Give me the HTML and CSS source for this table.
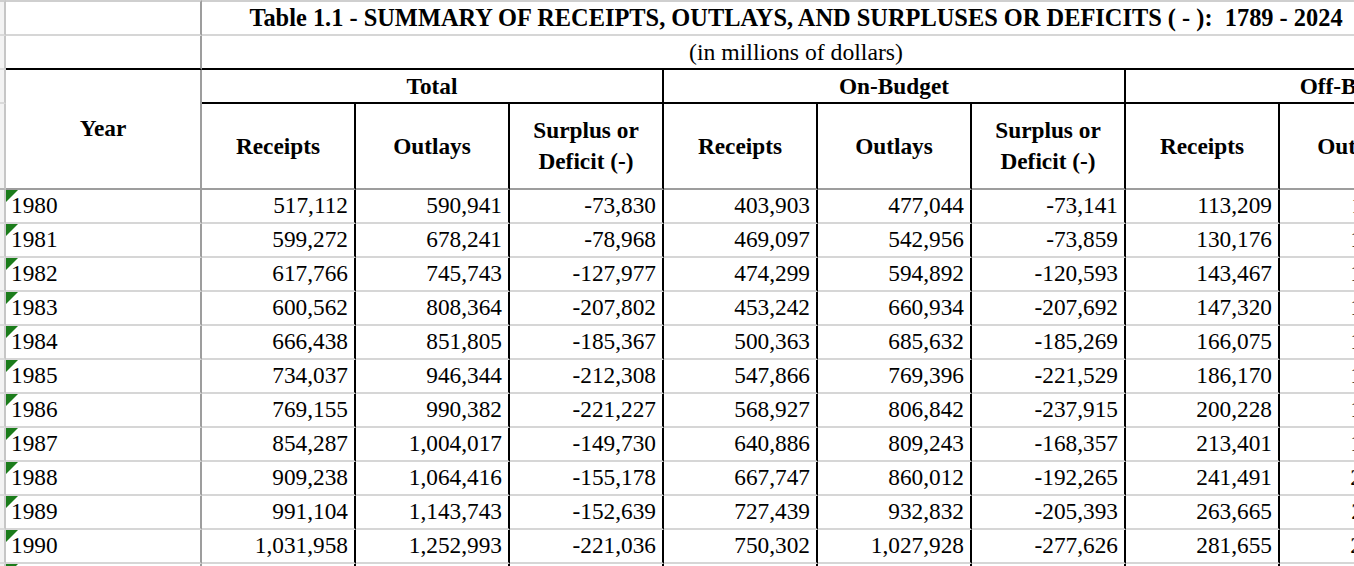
FILE: index.html
```html
<!DOCTYPE html>
<html lang="en">
<head>
<meta charset="utf-8">
<title>Table 1.1 - Summary of Receipts, Outlays, and Surpluses or Deficits</title>
<link rel="stylesheet" href="styles.css">
</head>
<body>
<table class="sheet">
  <colgroup>
    <col class="c-strip">
    <col class="c-year">
    <col class="c-num"><col class="c-num"><col class="c-num">
    <col class="c-num"><col class="c-num"><col class="c-num">
    <col class="c-num"><col class="c-num"><col class="c-num">
  </colgroup>
  <tbody>
    <tr class="r-title">
      <td class="strip"></td>
      <td class="blank"></td>
      <td class="title" colspan="9">Table 1.1 - SUMMARY OF RECEIPTS, OUTLAYS, AND SURPLUSES OR DEFICITS ( - ):&nbsp; 1789 - 2024</td>
    </tr>
    <tr class="r-sub">
      <td class="strip"></td>
      <td class="blank"></td>
      <td class="sub" colspan="9">(in millions of dollars)</td>
    </tr>
    <tr class="r-group">
      <td class="strip"></td>
      <th class="year-h" rowspan="2">Year</th>
      <th class="grp" colspan="3">Total</th>
      <th class="grp" colspan="3">On-Budget</th>
      <th class="grp" colspan="3">Off-Budget</th>
    </tr>
    <tr class="r-head">
      <td class="strip"></td>
      <th class="hd">Receipts</th>
      <th class="hd">Outlays</th>
      <th class="hd">Surplus or<br>Deficit (-)</th>
      <th class="hd">Receipts</th>
      <th class="hd">Outlays</th>
      <th class="hd">Surplus or<br>Deficit (-)</th>
      <th class="hd">Receipts</th>
      <th class="hd">Outlays</th>
      <th class="hd">Surplus or<br>Deficit (-)</th>
    </tr>
    <tr class="r-data"><td class="strip"></td><td class="yr">1980</td><td class="n">517,112</td><td class="n">590,941</td><td class="n">-73,830</td><td class="n">403,903</td><td class="n">477,044</td><td class="n">-73,141</td><td class="n">113,209</td><td class="n">113,897</td><td class="n">-689</td></tr>
    <tr class="r-data"><td class="strip"></td><td class="yr">1981</td><td class="n">599,272</td><td class="n">678,241</td><td class="n">-78,968</td><td class="n">469,097</td><td class="n">542,956</td><td class="n">-73,859</td><td class="n">130,176</td><td class="n">135,285</td><td class="n">-5,109</td></tr>
    <tr class="r-data"><td class="strip"></td><td class="yr">1982</td><td class="n">617,766</td><td class="n">745,743</td><td class="n">-127,977</td><td class="n">474,299</td><td class="n">594,892</td><td class="n">-120,593</td><td class="n">143,467</td><td class="n">150,851</td><td class="n">-7,384</td></tr>
    <tr class="r-data"><td class="strip"></td><td class="yr">1983</td><td class="n">600,562</td><td class="n">808,364</td><td class="n">-207,802</td><td class="n">453,242</td><td class="n">660,934</td><td class="n">-207,692</td><td class="n">147,320</td><td class="n">147,430</td><td class="n">-110</td></tr>
    <tr class="r-data"><td class="strip"></td><td class="yr">1984</td><td class="n">666,438</td><td class="n">851,805</td><td class="n">-185,367</td><td class="n">500,363</td><td class="n">685,632</td><td class="n">-185,269</td><td class="n">166,075</td><td class="n">166,173</td><td class="n">-98</td></tr>
    <tr class="r-data"><td class="strip"></td><td class="yr">1985</td><td class="n">734,037</td><td class="n">946,344</td><td class="n">-212,308</td><td class="n">547,866</td><td class="n">769,396</td><td class="n">-221,529</td><td class="n">186,170</td><td class="n">176,948</td><td class="n">9,222</td></tr>
    <tr class="r-data"><td class="strip"></td><td class="yr">1986</td><td class="n">769,155</td><td class="n">990,382</td><td class="n">-221,227</td><td class="n">568,927</td><td class="n">806,842</td><td class="n">-237,915</td><td class="n">200,228</td><td class="n">183,540</td><td class="n">16,688</td></tr>
    <tr class="r-data"><td class="strip"></td><td class="yr">1987</td><td class="n">854,287</td><td class="n">1,004,017</td><td class="n">-149,730</td><td class="n">640,886</td><td class="n">809,243</td><td class="n">-168,357</td><td class="n">213,401</td><td class="n">194,774</td><td class="n">18,627</td></tr>
    <tr class="r-data"><td class="strip"></td><td class="yr">1988</td><td class="n">909,238</td><td class="n">1,064,416</td><td class="n">-155,178</td><td class="n">667,747</td><td class="n">860,012</td><td class="n">-192,265</td><td class="n">241,491</td><td class="n">204,404</td><td class="n">37,087</td></tr>
    <tr class="r-data"><td class="strip"></td><td class="yr">1989</td><td class="n">991,104</td><td class="n">1,143,743</td><td class="n">-152,639</td><td class="n">727,439</td><td class="n">932,832</td><td class="n">-205,393</td><td class="n">263,665</td><td class="n">210,911</td><td class="n">52,754</td></tr>
    <tr class="r-data"><td class="strip"></td><td class="yr">1990</td><td class="n">1,031,958</td><td class="n">1,252,993</td><td class="n">-221,036</td><td class="n">750,302</td><td class="n">1,027,928</td><td class="n">-277,626</td><td class="n">281,655</td><td class="n">225,065</td><td class="n">56,590</td></tr>
    <tr class="r-data"><td class="strip"></td><td class="yr">1991</td><td class="n">1,054,988</td><td class="n">1,324,226</td><td class="n">-269,238</td><td class="n">761,103</td><td class="n">1,082,539</td><td class="n">-321,435</td><td class="n">293,885</td><td class="n">241,687</td><td class="n">52,198</td></tr>
  </tbody>
</table>
</body>
</html>
```
FILE: styles.css
```css
html, body {
  margin: 0;
  padding: 0;
  background: #ffffff;
  overflow: hidden;
}

body {
  width: 1354px;
  height: 566px;
  font-family: "Liberation Serif", "Times New Roman", serif;
  color: #000000;
}

.sheet {
  table-layout: fixed;
  border-collapse: separate;
  border-spacing: 0;
  width: 1588px;
  font-size: 23.3px;
}

.sheet col.c-strip { width: 6px; }
.sheet col.c-year { width: 196px; }
.sheet col.c-num { width: 154px; }

.sheet td,
.sheet th {
  box-sizing: border-box;
  padding: 0;
  margin: 0;
  white-space: nowrap;
  overflow: hidden;
  vertical-align: middle;
  border: 0 solid transparent;
}

/* left row-header remnant */
.sheet .strip {
  background: #f3f3f3;
  border-right: 2px solid #c6c6c6;
  border-bottom: 2px solid #dadada;
}

/* title rows */
.r-title td {
  height: 36px;
  border-top: 2px solid #cfcfcf;
  border-bottom: 2px solid #d6d6d6;
}
.r-sub td {
  height: 34px;
  border-bottom: 2px solid #000000;
}
.r-sub td.strip {
  border-bottom-color: #dadada;
}
.sheet .blank {
  border-right: 2px solid #9d9d9d;
}
.sheet .title {
  font-weight: bold;
  font-size: 24.4px;
  text-align: center;
  padding-right: 198px;
  line-height: 32px;
  overflow: visible;
}
.sheet .sub {
  font-weight: normal;
  font-size: 23.7px;
  text-align: center;
  padding-right: 198px;
  line-height: 32px;
  overflow: visible;
}

/* group header row */
.r-group th,
.r-group td {
  height: 34px;
}
.sheet .year-h {
  font-weight: bold;
  text-align: center;
  padding-bottom: 2px;
  border-right: 2px solid #9d9d9d;
  border-bottom: 2px solid #9d9d9d;
}
.sheet .grp {
  font-weight: bold;
  text-align: center;
  line-height: 32px;
  border-right: 2px solid #000000;
  border-bottom: 2px solid #000000;
}

/* column header row */
.r-head th,
.r-head td {
  height: 86px;
}
.r-head td.strip {
  border-bottom-color: #b5b5b5;
}
.sheet .hd {
  font-weight: bold;
  text-align: center;
  line-height: 31px;
  border-right: 2px solid #000000;
  border-bottom: 2px solid #9d9d9d;
}

/* data rows */
.r-data td {
  height: 34px;
  line-height: 30px;
  padding-bottom: 2px;
  border-bottom: 2px solid #d6d6d6;
}
.sheet .yr {
  position: relative;
  text-align: left;
  padding-left: 5px;
  border-right: 2px solid #9d9d9d;
}
.sheet .yr::before {
  content: "";
  position: absolute;
  top: 0;
  left: 0;
  width: 0;
  height: 0;
  border-top: 12px solid #1b7c1b;
  border-right: 12px solid transparent;
}
.sheet .n {
  text-align: right;
  padding-right: 6px;
  border-right: 2px solid #000000;
}
```
